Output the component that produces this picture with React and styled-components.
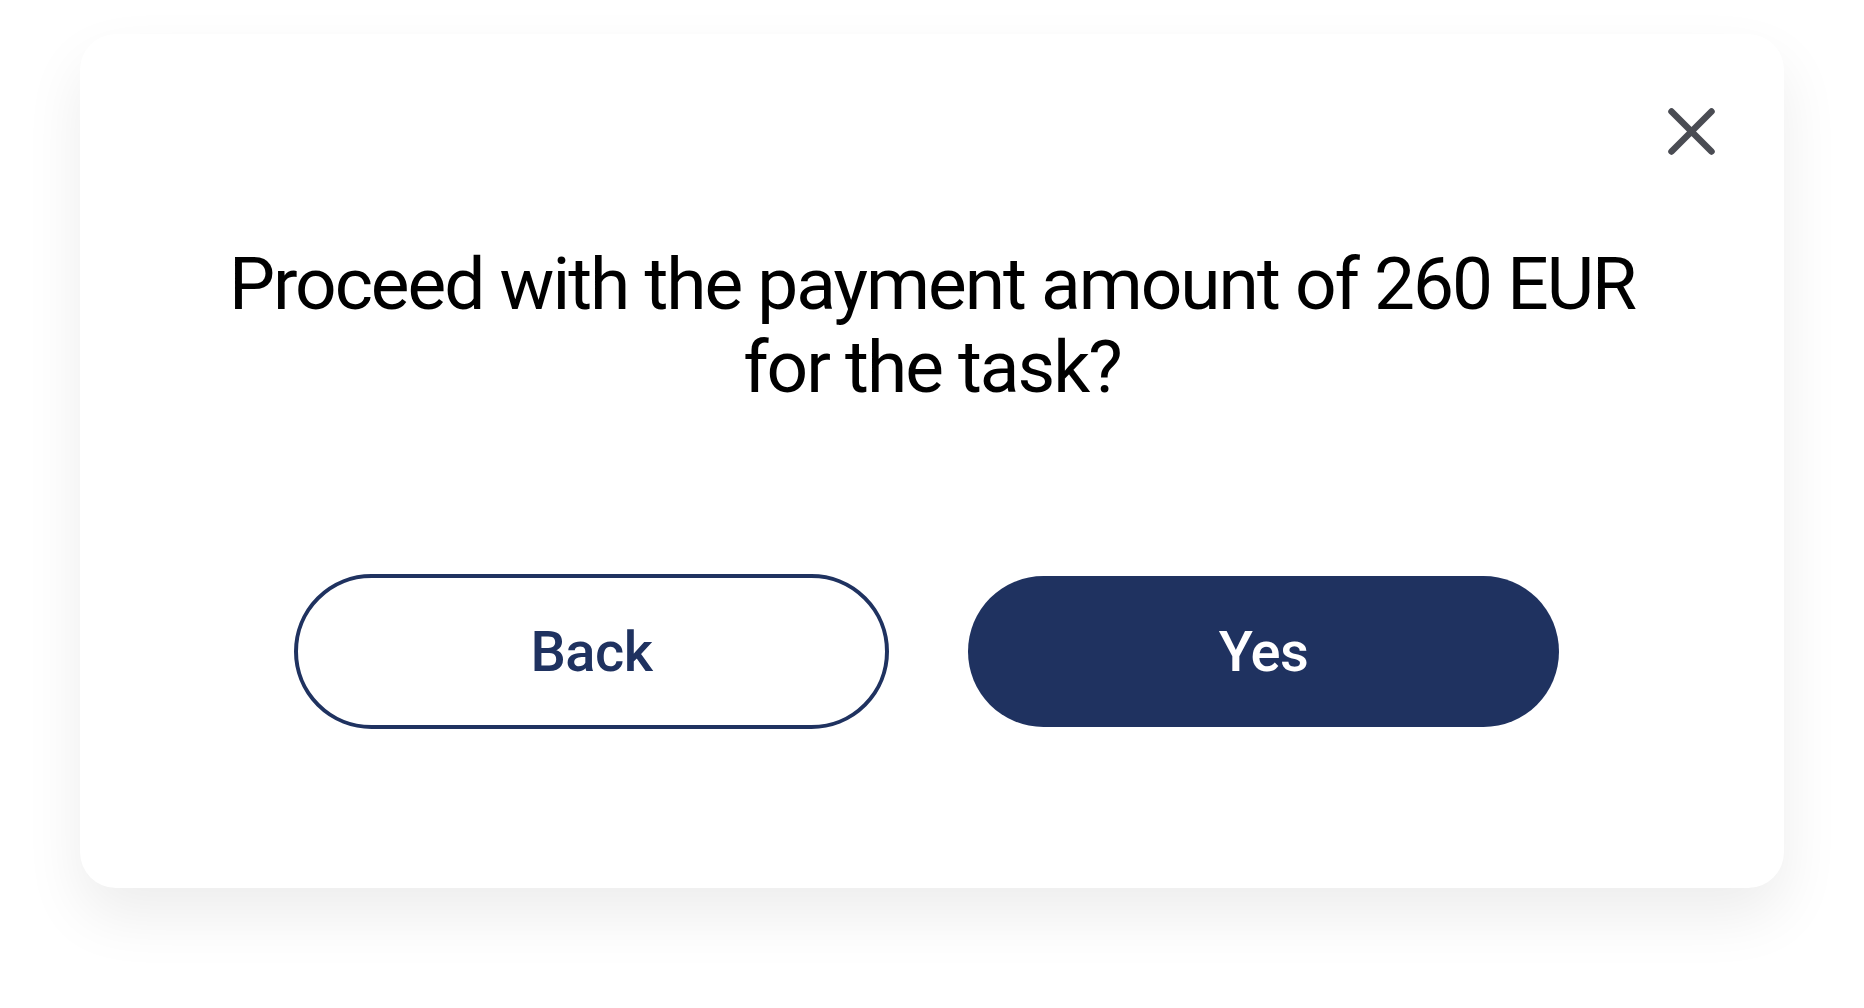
import React from "react";
import styled, { createGlobalStyle } from "styled-components";

const GlobalStyle = createGlobalStyle`
  html, body {
    margin: 0;
    padding: 0;
    background: #ffffff;
    font-family: Roboto, "Noto Sans", Arial, sans-serif;
  }
  #root {
    min-height: 1008px;
  }
`;

const Page = styled.div`
  width: 1864px;
  height: 1008px;
  box-sizing: border-box;
  padding: 34px 80px 0 80px;
  overflow: hidden;
`;

const Card = styled.div`
  width: 1704px;
  height: 854px;
  box-sizing: border-box;
  background: #ffffff;
  border-radius: 36px;
  box-shadow: 0 28px 60px rgba(0, 0, 0, 0.075);
  display: flex;
  flex-direction: column;
  padding: 74px 69px 0 69px;
`;

const Header = styled.div`
  display: flex;
  justify-content: flex-end;
  height: 47px;
`;

const CloseButton = styled.button`
  width: 47px;
  height: 47px;
  padding: 0;
  border: none;
  background: transparent;
  cursor: pointer;
  display: flex;
  color: #4a4c53;
`;

const Title = styled.h2`
  margin: 88px auto 0 auto;
  max-width: 1450px;
  font-family: Roboto, "Noto Sans", Arial, sans-serif;
  font-weight: 400;
  font-size: 73px;
  line-height: 83px;
  color: #000000;
  text-align: center;
  letter-spacing: -2px;
`;

const Actions = styled.div`
  margin-top: 165px;
  display: flex;
  align-items: center;
  gap: 79px;
  padding-left: 145px;
`;

const Button = styled.button`
  box-sizing: border-box;
  width: ${(p) => (p.$variant === "outline" ? "595px" : "591px")};
  height: ${(p) => (p.$variant === "outline" ? "155px" : "151px")};
  border-radius: 80px;
  border: ${(p) => (p.$variant === "outline" ? "4px solid #1f3260" : "none")};
  background: ${(p) => (p.$variant === "outline" ? "#ffffff" : "#1f3260")};
  color: ${(p) => (p.$variant === "outline" ? "#1f3260" : "#ffffff")};
  font-family: Roboto, "Noto Sans", Arial, sans-serif;
  font-weight: 500;
  font-size: 56px;
  letter-spacing: -0.5px;
  display: flex;
  align-items: center;
  justify-content: center;
  cursor: pointer;
  padding: 0;
`;

function CloseIcon() {
  return (
    <svg width="47" height="47" viewBox="0 0 47 47" fill="none">
      <path
        d="M3.5 3.5 L43.5 43.5 M43.5 3.5 L3.5 43.5"
        stroke="currentColor"
        strokeWidth="6.5"
        strokeLinecap="round"
      />
    </svg>
  );
}

export default function App() {
  return (
    <>
      <GlobalStyle />
      <Page>
        <Card>
          <Header>
            <CloseButton aria-label="Close">
              <CloseIcon />
            </CloseButton>
          </Header>
          <Title>Proceed with the payment amount of 260 EUR for the task?</Title>
          <Actions>
            <Button $variant="outline">Back</Button>
            <Button $variant="solid">Yes</Button>
          </Actions>
        </Card>
      </Page>
    </>
  );
}
